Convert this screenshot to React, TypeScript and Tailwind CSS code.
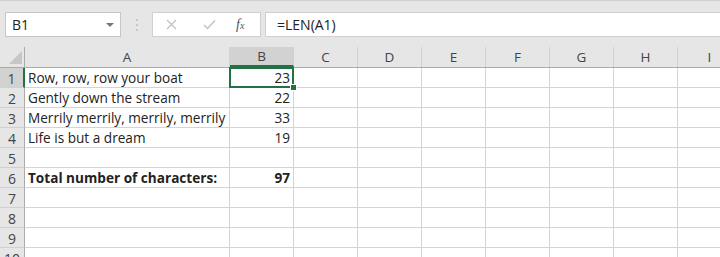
import React from 'react';

const cols = ['A', 'B', 'C', 'D', 'E', 'F', 'G', 'H', 'I'];
const widths = ['w-[205px]', 'w-[64px]', 'w-[64px]', 'w-[64px]', 'w-[64px]', 'w-[64px]', 'w-[64px]', 'w-[64px]', 'w-[64px]'];

interface Row {
  text: string;
  value: string;
  bold?: boolean;
}

const rows: Row[] = [
  { text: 'Row, row, row your boat', value: '23' },
  { text: 'Gently down the stream', value: '22' },
  { text: 'Merrily merrily, merrily, merrily', value: '33' },
  { text: 'Life is but a dream', value: '19' },
  { text: '', value: '' },
  { text: 'Total number of characters:', value: '97', bold: true },
  { text: '', value: '' },
  { text: '', value: '' },
  { text: '', value: '' },
  { text: '', value: '' },
];

export default function App() {
  return (
    <div className="w-[720px] h-[257px] overflow-hidden bg-[#e6e6e6] text-[#222] font-['Open_Sans',sans-serif]">
      {/* Formula bar */}
      <div className="h-[47px] border-t border-[#d0d0d0] pt-[11px] flex items-start">
        <div className="ml-[5px] w-[116px] h-[25px] bg-white border border-[#c6c6c6] flex items-center justify-between pl-[6px] pr-[6px] text-[14px]">
          <span>B1</span>
          <span className="w-0 h-0 border-l-[4px] border-r-[4px] border-t-[4px] border-l-transparent border-r-transparent border-t-[#777]" />
        </div>
        <div className="w-[31px] h-[25px] flex flex-col items-center justify-center gap-[3px]">
          <span className="w-[2px] h-[2px] bg-[#c8c8c8]" />
          <span className="w-[2px] h-[2px] bg-[#c8c8c8]" />
          <span className="w-[2px] h-[2px] bg-[#c8c8c8]" />
        </div>
        <div className="w-[109px] h-[25px] bg-white border border-[#d0d0d0] flex items-center">
          <svg className="ml-[13px]" width="11" height="11" viewBox="0 0 11 11">
            <path d="M1 1L10 10M10 1L1 10" stroke="#c2c2c2" strokeWidth="1.3" />
          </svg>
          <svg className="ml-[26px]" width="13" height="11" viewBox="0 0 13 11">
            <path d="M1 6L4.5 9.5L12 1.5" stroke="#c2c2c2" strokeWidth="1.4" fill="none" />
          </svg>
          <span className="ml-[20px] italic text-[14px] text-[#555] font-['Liberation_Serif',serif] leading-none">
            f<span className="text-[10px]">x</span>
          </span>
        </div>
        <div className="ml-[4px] flex-1 h-[25px] bg-white border-y border-l border-[#d0d0d0] flex items-center pl-[11px] text-[14px]">
          =LEN(A1)
        </div>
      </div>

      {/* Grid */}
      <div className="bg-white">
        {/* Column headers */}
        <div className="flex h-[21px] bg-[#e6e6e6] border-b border-[#ababab] text-[13.5px] text-[#444]">
          <div className="w-[25px] shrink-0 border-r border-[#ababab] relative">
            <svg className="absolute left-[9px] top-[4px]" width="13" height="13" viewBox="0 0 13 13">
              <path d="M13 0L13 13L0 13Z" fill="#c6c6c6" />
            </svg>
          </div>
          {cols.map((c, i) => (
            <div
              key={c}
              className={`${widths[i]} shrink-0 flex items-center justify-center border-r border-[#d0d0d0] pt-[1px] ${
                c === 'B' ? 'bg-[#d2d2d2] border-b-2 border-b-[#217346]' : ''
              }`}
            >
              {c}
            </div>
          ))}
        </div>

        {rows.map((r, ri) => (
          <div key={ri} className="flex h-[20px] text-[13.6px]">
            <div
              className={`w-[25px] shrink-0 flex items-center justify-center border-b border-[#d0d0d0] text-[#444] text-[14px] pt-[1px] ${
                ri === 0 ? 'bg-[#d2d2d2] border-r-2 border-r-[#217346]' : 'bg-[#e6e6e6] border-r border-r-[#ababab]'
              }`}
            >
              {ri + 1}
            </div>
            <div
              className={`w-[205px] shrink-0 border-r border-b border-[#d4d4d4] pl-[3px] pt-[1px] flex items-center whitespace-nowrap ${
                r.bold ? 'font-bold' : ''
              }`}
            >
              {r.text}
            </div>
            <div
              className={`w-[64px] shrink-0 border-r border-b border-[#d4d4d4] pr-[3px] pt-[1px] flex items-center justify-end relative ${
                r.bold ? 'font-bold' : ''
              } ${ri === 0 ? 'z-10' : ''}`}
            >
              {r.value}
              {ri === 0 && (
                <>
                  <div className="absolute -left-[1px] -top-[1px] -right-[1px] -bottom-[1px] border-2 border-[#217346]" />
                  <div className="absolute -right-[4px] -bottom-[4px] w-[7px] h-[7px] bg-[#217346] border border-white" />
                </>
              )}
            </div>
            {cols.slice(2).map((c) => (
              <div key={c} className="w-[64px] shrink-0 border-r border-b border-[#d4d4d4]" />
            ))}
          </div>
        ))}
      </div>
    </div>
  );
}
